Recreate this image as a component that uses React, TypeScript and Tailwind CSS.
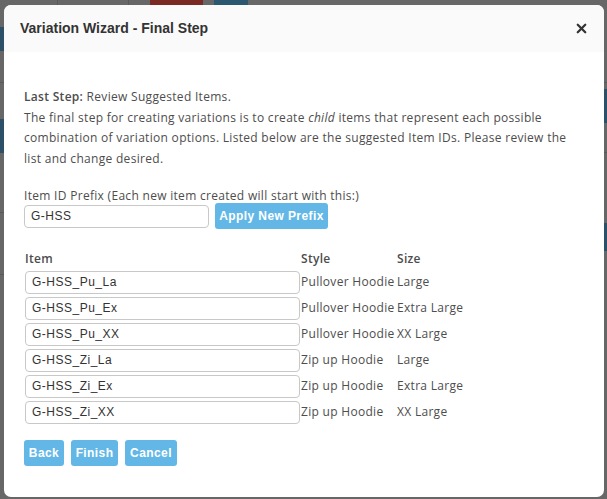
import React, { useState } from 'react';
import { X } from 'lucide-react';

type Variation = { id: string; style: string; size: string };

const initialRows: Variation[] = [
  { id: 'G-HSS_Pu_La', style: 'Pullover Hoodie', size: 'Large' },
  { id: 'G-HSS_Pu_Ex', style: 'Pullover Hoodie', size: 'Extra Large' },
  { id: 'G-HSS_Pu_XX', style: 'Pullover Hoodie', size: 'XX Large' },
  { id: 'G-HSS_Zi_La', style: 'Zip up Hoodie', size: 'Large' },
  { id: 'G-HSS_Zi_Ex', style: 'Zip up Hoodie', size: 'Extra Large' },
  { id: 'G-HSS_Zi_XX', style: 'Zip up Hoodie', size: 'XX Large' },
];

const bodyFont = "font-['Open_Sans',sans-serif]";
const inputFont = "font-['Liberation_Sans',Arial,sans-serif]";

const WizardButton: React.FC<{ label: string; className?: string }> = ({ label, className = '' }) => (
  <button
    className={`h-[26px] shrink-0 whitespace-nowrap rounded-[3px] bg-[#62b7e6] px-[4px] text-[12px] font-bold tracking-[0.4px] text-white ${inputFont} ${className}`}
  >
    {label}
  </button>
);

// Dimmed page sitting behind the dialog
const Backdrop: React.FC = () => (
  <div className="absolute inset-0 bg-[#676767]">
    <div className="flex h-[5px] overflow-hidden">
      <div className="w-[58px] border-r border-[#5a5a5a]" />
      <div className="w-[71px] border-r border-[#5a5a5a]" />
      <div className="ml-[21px] mr-[11px] w-[53px] bg-[#7a2a22]" />
      <div className="w-[34px] bg-[#2b5770]" />
    </div>
    <div className="flex h-full justify-between">
      <div className="flex w-[4px] flex-col">
        <div className="h-[22px]" />
        <div className="h-[24px] bg-[#2b5067]" />
        <div className="h-[32px] border-b border-[#595959]" />
        <div className="h-[36px]" />
        <div className="h-[34px] bg-[#2b5067]" />
        <div className="h-[60px] border-b border-[#595959]" />
        <div className="h-[62px] border-b border-[#595959]" />
      </div>
      <div className="flex w-[3px] flex-col">
        <div className="h-[78px] border-b border-[#595959]" />
        <div className="h-[6px]" />
        <div className="h-[34px] bg-[#2b5067]" />
        <div className="h-[30px] border-b border-[#595959]" />
        <div className="h-[70px]" />
        <div className="h-[28px] bg-[#2b5067]" />
      </div>
    </div>
  </div>
);

export default function App() {
  const [prefix, setPrefix] = useState('G-HSS');
  const [rows, setRows] = useState(initialRows);

  const updateRow = (i: number, id: string) =>
    setRows(rows.map((r, idx) => (idx === i ? { ...r, id } : r)));

  return (
    <div className="relative h-[499px] w-[607px] overflow-hidden">
      <Backdrop />

      <div className="absolute left-[4px] top-[5px] flex h-[492px] w-[600px] flex-col overflow-hidden rounded-[7px] bg-white">
        <div className="flex h-[47px] shrink-0 items-center justify-between bg-[#fafafa] pl-[16px] pr-[15px]">
          <h2 className={`text-[14px] font-bold text-[#333] ${inputFont}`}>Variation Wizard - Final Step</h2>
          <X size={15} strokeWidth={3.6} className="text-[#333]" />
        </div>

        <div className={`flex flex-col pl-[20px] pr-[16px] pt-[35px] text-[12px] tracking-[0.3px] text-[#4d4d4d] ${bodyFont}`}>
          <p className="leading-[20.5px]">
            <span className="font-semibold">Last Step:</span> Review Suggested Items.
            <br />
            The final step for creating variations is to create <i>child</i> items that represent each possible
            <br />
            combination of variation options. Listed below are the suggested Item IDs. Please review the
            <br />
            list and change desired.
          </p>

          <label className="mt-[19px] leading-[16px]">Item ID Prefix (Each new item created will start with this:)</label>
          <div className="mt-[-1px] flex items-center gap-[6px]">
            <input
              value={prefix}
              onChange={(e) => setPrefix(e.target.value)}
              className={`h-[23px] w-[185px] rounded-[4px] border border-[#c8c8c8] px-[6px] text-[12px] tracking-[0.5px] text-[#333] outline-none ${inputFont}`}
            />
            <WizardButton label="Apply New Prefix" className="w-[113px]" />
          </div>

          <table className="mt-[20px] border-collapse text-left">
            <thead>
              <tr className="leading-[20px]">
                <th className="w-[277px] pl-[1px] font-semibold">Item</th>
                <th className="w-[96px] font-semibold">Style</th>
                <th className="font-semibold">Size</th>
              </tr>
            </thead>
            <tbody>
              {rows.map((r, i) => (
                <tr key={i} className="h-[26px]">
                  <td className="pl-[1px]">
                    <input
                      value={r.id}
                      onChange={(e) => updateRow(i, e.target.value)}
                      className={`block h-[23px] w-[275px] rounded-[4px] border border-[#c8c8c8] px-[6px] text-[12px] tracking-[0.5px] text-[#333] outline-none ${inputFont}`}
                    />
                  </td>
                  <td className="whitespace-nowrap">{r.style}</td>
                  <td className="whitespace-nowrap">{r.size}</td>
                </tr>
              ))}
            </tbody>
          </table>

          <div className="mt-[15px] flex gap-[7px]">
            <WizardButton label="Back" className="w-[40px]" />
            <WizardButton label="Finish" className="w-[47px]" />
            <WizardButton label="Cancel" className="w-[52px]" />
          </div>
        </div>
      </div>
    </div>
  );
}
